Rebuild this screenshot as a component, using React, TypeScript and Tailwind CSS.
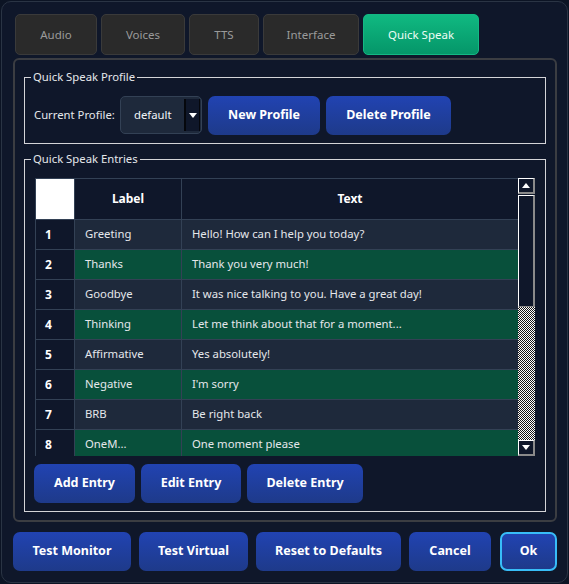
import React from "react";

const rows: [string, string][] = [
  ["Greeting", "Hello! How can I help you today?"],
  ["Thanks", "Thank you very much!"],
  ["Goodbye", "It was nice talking to you. Have a great day!"],
  ["Thinking", "Let me think about that for a moment..."],
  ["Affirmative", "Yes absolutely!"],
  ["Negative", "I'm sorry"],
  ["BRB", "Be right back"],
  ["OneM...", "One moment please"],
];

function Tab({ label, w, active }: { label: string; w: string; active?: boolean }) {
  return (
    <div
      className={
        active
          ? `${w} h-[41px] rounded-[5px] border border-[#14b883] bg-linear-to-b from-[#10b981] to-[#059669] text-[#ecfdf5] text-[11.5px] flex items-center justify-center`
          : `${w} h-[41px] rounded-[5px] border border-[#3a3a3a] bg-[#2a2a2a] text-[#9a9a9a] text-[11.5px] flex items-center justify-center`
      }
    >
      {label}
    </div>
  );
}

function Btn({ label, w, ok }: { label: string; w: string; ok?: boolean }) {
  return (
    <div
      className={`${w} h-[39px] flex-none rounded-[7px] bg-linear-to-b from-[#2143b2] to-[#1e3a8a] text-white font-bold text-[12.5px] flex items-center justify-center ${
        ok ? "border-2 border-[#38bdf8]" : ""
      }`}
    >
      {label}
    </div>
  );
}

function Group({ title, className, children }: { title: string; className: string; children: React.ReactNode }) {
  return (
    <div className={`relative border border-[#d4d4d8] ${className}`}>
      <span className="absolute left-[6px] -top-[9px] px-[2px] bg-[#0f172a] text-[11.3px] leading-[16px] text-[#e5e7eb]">
        {title}
      </span>
      {children}
    </div>
  );
}

function Arrow({ up }: { up?: boolean }) {
  return (
    <svg width="8" height="5" viewBox="0 0 8 5">
      {up ? <polygon points="0,5 8,5 4,0" fill="#fff" /> : <polygon points="0,0 8,0 4,5" fill="#fff" />}
    </svg>
  );
}

function ScrollBtn({ up }: { up?: boolean }) {
  return (
    <div className="h-[16px] w-[17px] flex-none border-t border-l border-white border-r-2 border-b-2 border-r-[#8a8a8a] border-b-[#8a8a8a] bg-[#0f172a] flex items-center justify-center">
      <Arrow up={up} />
    </div>
  );
}

export default function App() {
  return (
    <div className="w-[569px] h-[584px] bg-[#0c1424] p-px font-['Noto_Sans',sans-serif]">
      <div className="w-full h-full rounded-[10px] border border-[#2a3444] bg-[#0f172a] pt-[12px] pl-[11px] flex flex-col">
        {/* Tabs */}
        <div className="flex gap-[4px] ml-[2px]">
          <Tab label="Audio" w="w-[82px]" />
          <Tab label="Voices" w="w-[84px]" />
          <Tab label="TTS" w="w-[70px]" />
          <Tab label="Interface" w="w-[96px]" />
          <Tab label="Quick Speak" w="w-[116px]" active />
        </div>

        {/* Panel */}
        <div className="mt-[3px] w-[544px] h-[464px] border-2 border-[#3b3d42] rounded-[6px] px-[9px] pt-[17px] flex flex-col">
          <Group title="Quick Speak Profile" className="w-[522px] h-[67px] pt-[18px] pl-[9px]">
            <div className="flex items-center h-[38px]">
              <span className="w-[79px] text-[11.3px] text-[#e5e7eb] mr-[7px] whitespace-nowrap">Current Profile:</span>
              <div className="w-[82px] h-[38px] flex-none rounded-[5px] border border-[#334155] bg-[#1e293b] flex items-stretch">
                <span className="flex-1 pl-[13px] flex items-center text-[11.3px] text-[#f1f5f9]">default</span>
                <div className="w-[16px] my-[2px] mr-[1px] bg-[#0f172a] border-l-2 border-r border-[#05070c] flex items-center justify-center">
                  <Arrow />
                </div>
              </div>
              <div className="ml-[6px] flex gap-[6px]">
                <Btn label="New Profile" w="w-[112px]" />
                <Btn label="Delete Profile" w="w-[125px]" />
              </div>
            </div>
          </Group>

          <Group title="Quick Speak Entries" className="mt-[15px] w-[522px] h-[353px] pt-[18px] pl-[9px]">
            <div className="flex ml-[1px] h-[278px]">
              <div className="w-[483px] h-[278px] flex-none overflow-hidden bg-[#334155] border-t border-l border-[#334155]">
                <div className="grid grid-cols-[38px_106px_336px] gap-px">
                  <div className="h-[40px] bg-white" />
                  <div className="h-[40px] bg-[#0f172a] flex items-center justify-center text-[12px] font-bold text-white">
                    Label
                  </div>
                  <div className="h-[40px] bg-[#0f172a] flex items-center justify-center text-[12px] font-bold text-white">
                    Text
                  </div>
                  {rows.map(([label, text], i) => {
                    const bg = i % 2 === 0 ? "bg-[#1e293b]" : "bg-[#08503b]";
                    return (
                      <React.Fragment key={i}>
                        <div className="h-[29px] bg-[#0f172a] pl-[9px] flex items-center text-[12px] font-bold text-white">
                          {i + 1}
                        </div>
                        <div className={`h-[29px] ${bg} pl-[10px] flex items-center text-[11.3px] text-[#e5e7eb] whitespace-nowrap`}>
                          {label}
                        </div>
                        <div className={`h-[29px] ${bg} pl-[10px] flex items-center text-[11.3px] text-[#e5e7eb] whitespace-nowrap`}>
                          {text}
                        </div>
                      </React.Fragment>
                    );
                  })}
                </div>
              </div>
              {/* Scrollbar */}
              <div className="w-[17px] h-[278px] flex-none flex flex-col">
                <ScrollBtn up />
                <div className="h-[112px] mt-px flex-none border-t border-l border-white border-r-2 border-b border-r-[#8a8a8a] border-b-[#8a8a8a] bg-[#0f172a]" />
                <svg className="block flex-none w-[17px] h-[133px]" width="17" height="133" viewBox="0 0 17 133">
                  <defs>
                    <pattern id="chk" x="0" y="0" width="2" height="2" patternUnits="userSpaceOnUse">
                      <rect width="2" height="2" fill="#161616" />
                      <rect width="1" height="1" fill="#ffffff" />
                      <rect x="1" y="1" width="1" height="1" fill="#ffffff" />
                    </pattern>
                  </defs>
                  <rect x="0" y="0" width="17" height="133" fill="url(#chk)" shapeRendering="crispEdges" />
                </svg>
                <ScrollBtn />
              </div>
            </div>
            <div className="mt-[8px] flex gap-[6px]">
              <Btn label="Add Entry" w="w-[101px]" />
              <Btn label="Edit Entry" w="w-[100px]" />
              <Btn label="Delete Entry" w="w-[116px]" />
            </div>
          </Group>
        </div>

        {/* Bottom buttons */}
        <div className="mt-[10px] flex gap-[8px]">
          <Btn label="Test Monitor" w="w-[118px]" />
          <Btn label="Test Virtual" w="w-[109px]" />
          <Btn label="Reset to Defaults" w="w-[145px]" />
          <Btn label="Cancel" w="w-[82px]" />
          <div className="ml-px">
            <Btn label="Ok" w="w-[57px]" ok />
          </div>
        </div>
      </div>
    </div>
  );
}
